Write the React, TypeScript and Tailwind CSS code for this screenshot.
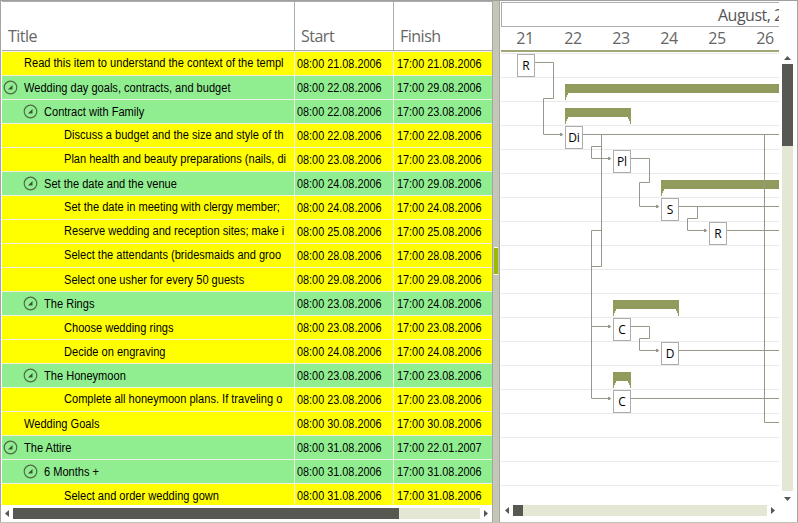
type Row = { level: number; title: string; start: string; finish: string; group?: boolean; cut?: boolean };

const rows: Row[] = [
  { level: 0, title: 'Read this item to understand the context of the templ', start: '21.08.2006', finish: '21.08.2006', cut: true },
  { level: 0, title: 'Wedding day goals, contracts, and budget', start: '22.08.2006', finish: '29.08.2006', group: true },
  { level: 1, title: 'Contract with Family', start: '22.08.2006', finish: '23.08.2006', group: true },
  { level: 2, title: 'Discuss a budget and the size and style of th', start: '22.08.2006', finish: '22.08.2006', cut: true },
  { level: 2, title: 'Plan health and beauty preparations (nails, di', start: '23.08.2006', finish: '23.08.2006', cut: true },
  { level: 1, title: 'Set the date and the venue', start: '24.08.2006', finish: '29.08.2006', group: true },
  { level: 2, title: 'Set the date in meeting with clergy member;', start: '24.08.2006', finish: '24.08.2006', cut: true },
  { level: 2, title: 'Reserve wedding and reception sites; make i', start: '25.08.2006', finish: '25.08.2006', cut: true },
  { level: 2, title: 'Select the attendants (bridesmaids and groo', start: '28.08.2006', finish: '28.08.2006', cut: true },
  { level: 2, title: 'Select one usher for every 50 guests', start: '29.08.2006', finish: '29.08.2006' },
  { level: 1, title: 'The Rings', start: '23.08.2006', finish: '24.08.2006', group: true },
  { level: 2, title: 'Choose wedding rings', start: '23.08.2006', finish: '23.08.2006' },
  { level: 2, title: 'Decide on engraving', start: '24.08.2006', finish: '24.08.2006' },
  { level: 1, title: 'The Honeymoon', start: '23.08.2006', finish: '23.08.2006', group: true },
  { level: 2, title: 'Complete all honeymoon plans. If traveling o', start: '23.08.2006', finish: '23.08.2006', cut: true },
  { level: 0, title: 'Wedding Goals', start: '30.08.2006', finish: '30.08.2006' },
  { level: 0, title: 'The Attire', start: '31.08.2006', finish: '22.01.2007', group: true },
  { level: 1, title: '6 Months +', start: '31.08.2006', finish: '31.08.2006', group: true },
  { level: 2, title: 'Select and order wedding gown', start: '31.08.2006', finish: '31.08.2006' },
];

const indents = ['pl-0', 'pl-[20px]', 'pl-[40px]'];

function Expander() {
  return (
    <svg width="15" height="15" viewBox="0 0 15 15" className="shrink-0">
      <circle cx="7.5" cy="7.5" r="6.3" fill="none" stroke="#4f6b48" strokeWidth="1.2" />
      <path d="M9.5 5V9.5H5Z" fill="#3d5238" />
    </svg>
  );
}

function GridRow({ row }: { row: Row }) {
  const fill = row.group ? 'bg-[#90ee90]' : 'bg-[#ffff00]';
  return (
    <div className="flex h-6 shrink-0 gap-px border-b border-[#f0f0e8] bg-[#f0f0e8] text-[12px] leading-[23px] text-black">
      <div className={`flex w-[292px] items-center overflow-hidden whitespace-pre ${fill} ${indents[row.level]}`}>
        <span className="flex w-[22px] shrink-0 pl-px">{row.group && <Expander />}</span>
        <span className={`origin-left scale-x-[0.922] ${row.cut ? 'pb-px leading-[22px]' : 'pt-px leading-[22px]'}`}>{row.title}</span>
      </div>
      <div className={`w-[98px] whitespace-pre pl-[2px] pt-px leading-[22px] ${fill}`}>
        <span className="inline-block origin-left scale-x-[0.905]">08:00 {row.start}</span>
      </div>
      <div className={`w-[98px] whitespace-pre pl-[3px] pt-px leading-[22px] ${fill}`}>
        <span className="inline-block origin-left scale-x-[0.905]">17:00 {row.finish}</span>
      </div>
    </div>
  );
}

function Arrow({ dir }: { dir: 'left' | 'right' | 'up' | 'down' }) {
  const shape = { left: 'M4 0V7L0 3.5Z', right: 'M0 0V7L4 3.5Z', up: 'M0 4H7L3.5 0Z', down: 'M0 0H7L3.5 4Z' }[dir];
  const flat = dir === 'up' || dir === 'down';
  return (
    <svg width={flat ? 7 : 4} height={flat ? 4 : 7} className="shrink-0">
      <path d={shape} fill="#575852" />
    </svg>
  );
}

function LeftPane() {
  return (
    <section className="flex w-[493px] flex-col border-l border-r border-[#a5a5a2] bg-white pl-px">
      <div className="flex h-[50px] shrink-0 border-b border-t border-[#acacac] font-['Open_Sans','Noto_Sans',sans-serif] text-[16px] leading-[22px] tracking-[-0.5px] text-[#666]">
        <div className="flex w-[293px] items-end border-r border-[#acacac] pb-[3px] pl-[6px]">Title</div>
        <div className="flex w-[99px] items-end border-r border-[#acacac] pb-[3px] pl-[6px]">Start</div>
        <div className="flex items-end pb-[3px] pl-[6px]">Finish</div>
      </div>
      <div className="flex h-[454px] shrink-0 flex-col overflow-hidden border-t border-[#f0f0e8]">
        {rows.map((r) => <GridRow key={r.title} row={r} />)}
      </div>
      <div className="mt-[3px] flex h-[11px] items-center pl-[3px]">
        <Arrow dir="left" />
        <div className="ml-1 flex h-[11px] w-[467px] bg-[#e3e7d3]">
          <div className="w-[386px] bg-[#575852]" />
        </div>
        <div className="ml-1 flex"><Arrow dir="right" /></div>
      </div>
    </section>
  );
}

const links = [
  'M535 62.5H553.5V98.5H543.5V134.5H561',
  'M583 134.5H779',
  'M601.5 134V266.5H591.5',
  'M601 146.5H591.5V158.5H609',
  'M601 230.5H591.5V398.5H609',
  'M591 326.5H609',
  'M631 158.5H649.5V182.5H639.5V206.5H657',
  'M679 206.5H779',
  'M697.5 206V218.5H687.5V230.5H705',
  'M727 230.5H779',
  'M631 326.5H649.5V338.5H639.5V350.5H657',
  'M679 350.5H779',
  'M631 398.5H779',
  'M764.5 134V422.5H779',
];
const arrowheads = [[561, 134], [609, 158], [657, 206], [705, 230], [609, 326], [657, 350], [609, 398]];
const summaries = [[565, 84, 240], [565, 108, 66], [661, 180, 140], [613, 300, 66], [613, 372, 18]];
const tasks: [number, number, string][] = [
  [517, 54, 'R'], [565, 126, 'Di'], [613, 150, 'Pl'], [661, 198, 'S'], [709, 222, 'R'], [613, 318, 'C'], [661, 342, 'D'], [613, 390, 'C'],
];

function Chart() {
  return (
    <svg width="278" height="453" viewBox="501 52 278 453" className="block shrink-0">
      {rows.map((r, i) => <rect key={r.title} x="501" y={53 + 24 * i} width="278" height="1" fill="#e9e9e9" />)}
      {links.map((d) => <path key={d} d={d} fill="none" stroke="#98988a" />)}
      {summaries.map(([x, y, w]) => (
        <path
          key={`${x}-${y}`}
          shapeRendering="crispEdges"
          d={`M${x} ${y}h${w}v16h-1v-3h-1v-2h-1v-2h-1h${8 - w}v0h-1v2h-1v2h-1v3h-1z`}
          fill="#929b5e"
        />
      ))}
      <rect x="764" y="180" width="1" height="9" fill="#98988a" />
      {arrowheads.map(([x, y]) => <path key={`${x}-${y}`} d={`M${x - 1} ${y - 1}h2v1h1v1h-1v1h-2z`} fill="#98988a" shapeRendering="crispEdges" />)}
      {tasks.map(([x, y, label]) => (
        <g key={`${x}-${y}`}>
          <rect x={x + 0.5} y={y + 0.5} width="17" height="22" fill="#fff" stroke="#acacac" />
          <text x={x + 9} y={y + 16} textAnchor="middle" className="fill-black font-['Open_Sans','Noto_Sans',sans-serif] text-[12px]">{label}</text>
        </g>
      ))}
    </svg>
  );
}

function RightPane() {
  return (
    <section className="flex w-[299px] border-l border-r border-[#a5a5a2] bg-white pl-px">
      <div className="flex w-[278px] flex-col">
        <div className="mt-px h-[25px] w-[278px] shrink-0 overflow-hidden whitespace-pre border-b border-l border-t border-[#acacac] pl-[216px] font-['Open_Sans','Noto_Sans',sans-serif] text-[16px] leading-[24px] tracking-[-0.5px] text-[#555]">August, 2006</div>
        <div className="flex h-[23px] shrink-0 overflow-hidden font-['Open_Sans','Noto_Sans',sans-serif] text-[16px] leading-[23px] tracking-[-0.3px] text-[#666]">
          {[21, 22, 23, 24, 25, 26].map((d) => <div key={d} className="w-12 shrink-0 text-center">{d}</div>)}
        </div>
        <div className="h-[2px] shrink-0 bg-[#a1a674]" />
        <Chart />
        <div className="flex h-[11px] items-center pl-1">
          <Arrow dir="left" />
          <div className="ml-1 flex h-[11px] w-[254px] shrink-0 bg-[#e3e7d3]"><div className="w-[10px] bg-[#575852]" /></div>
          <div className="ml-1 flex"><Arrow dir="right" /></div>
        </div>
      </div>
      <div className="ml-[3px] flex w-[11px] flex-col items-center pt-[55px]">
        <Arrow dir="up" />
        <div className="mt-1 h-[427px] w-[11px] bg-[#e3e7d3]"><div className="h-[82px] bg-[#575852]" /></div>
        <div className="mt-[6px]"><Arrow dir="down" /></div>
      </div>
    </section>
  );
}

export default function App() {
  return (
    <div className="flex h-[523px] w-[798px] overflow-hidden border-b border-t border-b-[#bfc0b0] border-t-[#9f9f9f] bg-white font-['Liberation_Sans',Arial,sans-serif]">
      <LeftPane />
      <div className="flex w-[6px] flex-col items-center bg-[#c5c6b6] pt-[246px]">
        <div className="h-[28px] w-[4px] border-b border-t border-white bg-[#9bba00]" />
      </div>
      <RightPane />
    </div>
  );
}
